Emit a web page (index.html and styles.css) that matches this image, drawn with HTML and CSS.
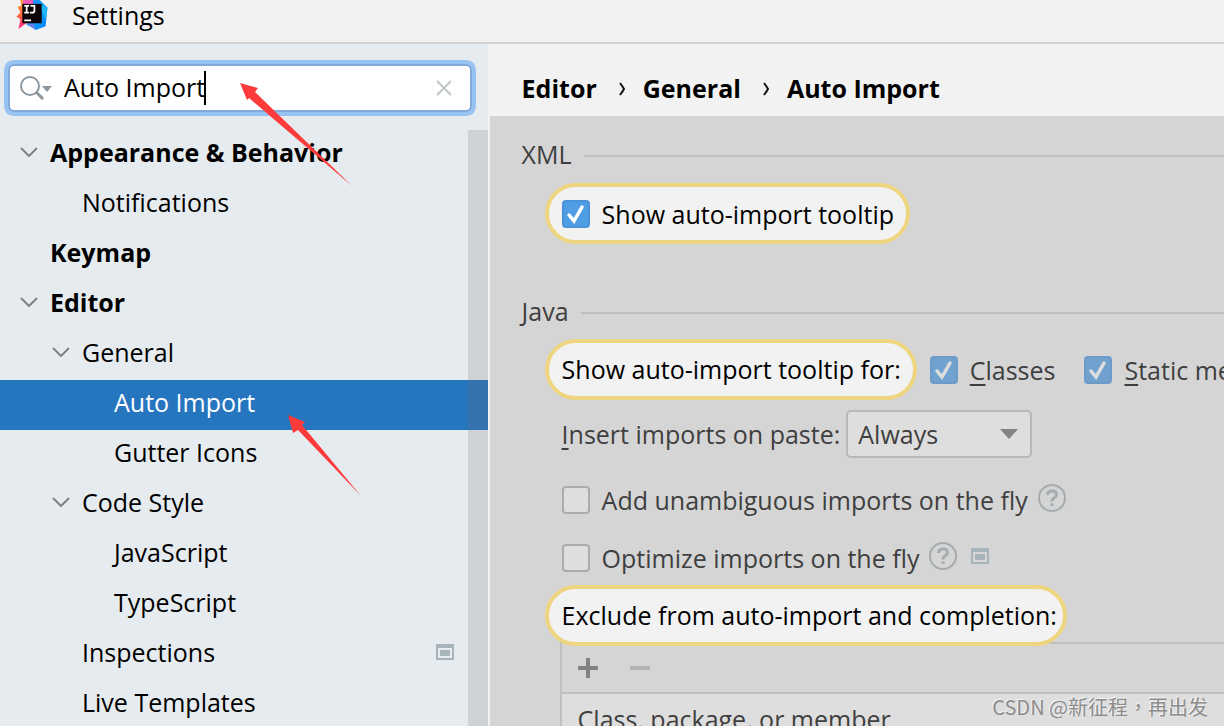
FILE: index.html
```html
<!DOCTYPE html>
<html lang="en">
<head>
<meta charset="utf-8">
<meta name="viewport" content="width=device-width, initial-scale=1">
<title>Settings</title>
<link rel="stylesheet" href="styles.css">
</head>
<body>
<div class="window">
  <header class="titlebar">
    <svg class="logo" viewBox="0 0 32 32" aria-hidden="true">
      <defs>
        <linearGradient id="warm" x1="0" y1="0" x2="0" y2="1"><stop offset="0" stop-color="#f9a03c"/><stop offset=".5" stop-color="#fb6a3c"/><stop offset="1" stop-color="#fe2889"/></linearGradient>
        <linearGradient id="cool" x1="0" y1="0" x2="1" y2="1"><stop offset="0" stop-color="#2b7cf0"/><stop offset=".5" stop-color="#08a0f8"/><stop offset="1" stop-color="#087cfa"/></linearGradient>
      </defs>
      <path d="M4 0 20 0 18 27 10 24 2 30 4 20 0 17 4 13 1 7 5 6Z" fill="url(#warm)"/>
      <path d="M7 0 20 0 17 8 6 8Z" fill="#f45bb8"/>
      <path d="M17 0 24 0 32 8 30 27 20 31 10 25 17 20Z" fill="url(#cool)"/>
      <path d="m24 5 8 3-2 12Z" fill="#21b7f5"/>
      <path d="m12 25 8 6-3-7Z" fill="#7d79e8"/>
      <rect x="6" y="4" width="20" height="20" fill="#0d0508"/>
      <path d="M8 6h5M8 13h5M10.500 6v7M14.500 6h4v5q0 2-2 2h-2.500" fill="none" stroke="#fff" stroke-width="1.800"/>
      <path d="M8 21h7" stroke="#fff" stroke-width="1.800"/>
    </svg>
    <h1 class="title">Settings</h1>
  </header>
  <div class="body">
    <aside class="sidebar">
      <div class="search">
        <svg class="search-icon" viewBox="0 0 32 24" aria-hidden="true">
          <circle cx="10" cy="10" r="9" fill="none" stroke="#8c979f" stroke-width="2"/>
          <path d="m16 16 7 7" stroke="#8c979f" stroke-width="3"/>
          <path d="M22 10h10l-5 6Z" fill="#8c979f"/>
        </svg>
        <input class="search-input" type="text" value="Auto Import" aria-label="Search settings">
        <span class="caret"></span>
        <button class="clear" type="button" aria-label="Clear search">
          <svg viewBox="0 0 16 16"><path d="m1 1 14 14M15 1 1 15" stroke="#bfc5c9" stroke-width="2"/></svg>
        </button>
      </div>
      <nav class="tree-wrap">
        <ul class="tree">
          <li class="row top"><svg class="chev" viewBox="0 0 18 10"><path d="m1 1 8 8 8-8"/></svg>Appearance &amp; Behavior</li>
          <li class="row level-1">Notifications</li>
          <li class="row top">Keymap</li>
          <li class="row top"><svg class="chev" viewBox="0 0 18 10"><path d="m1 1 8 8 8-8"/></svg>Editor</li>
          <li class="row level-1"><svg class="chev" viewBox="0 0 18 10"><path d="m1 1 8 8 8-8"/></svg>General</li>
          <li class="row level-2 selected">Auto Import</li>
          <li class="row level-2">Gutter Icons</li>
          <li class="row level-1"><svg class="chev" viewBox="0 0 18 10"><path d="m1 1 8 8 8-8"/></svg>Code Style</li>
          <li class="row level-2">JavaScript</li>
          <li class="row level-2">TypeScript</li>
          <li class="row level-1">Inspections<svg class="project" viewBox="0 0 18 16"><path d="M0 0h18v16H0ZM2 4v10h14V4Z" fill-rule="evenodd"/><path d="M4 6h10v6H4Z"/></svg></li>
          <li class="row level-1">Live Templates</li>
        </ul>
        <div class="scrollbar"></div>
      </nav>
    </aside>
    <main class="content">
      <div class="crumbs">
        <span>Editor</span><svg class="sep" viewBox="0 0 6 14"><path d="M1 1q3 4 4 6-1 2-4 6"/></svg>
        <span>General</span><svg class="sep" viewBox="0 0 6 14"><path d="M1 1q3 4 4 6-1 2-4 6"/></svg>
        <span>Auto Import</span>
      </div>
      <div class="panel">
        <h2 class="section">XML</h2>
        <label class="pill first"><input class="check" type="checkbox" checked>Show auto-import tooltip</label>
        <h2 class="section java">Java</h2>
        <div class="line">
          <span class="pill">Show auto-import tooltip for:</span>
          <label class="option"><input class="check dim" type="checkbox" checked><span><u>C</u>lasses</span></label>
          <label class="option second"><input class="check dim" type="checkbox" checked><span><u>S</u>tatic me</span></label>
        </div>
        <div class="line paste">
          <label for="paste"><u>I</u>nsert imports on paste:</label>
          <select id="paste" class="combo"><option>Always</option><option>Ask</option><option>Never</option></select>
        </div>
        <div class="line fly">
          <label class="option"><input class="check" type="checkbox"><span>Add unambiguous imports on the fly</span></label>
          <svg class="help" viewBox="0 0 28 28"><circle cx="14" cy="14" r="13"/><path d="M9.500 11q0-4 4.500-4t4.500 3.500q0 2-2.500 3.500-2 1.200-2 3.500M14 19.500v2.500"/></svg>
        </div>
        <div class="line fly">
          <label class="option"><input class="check" type="checkbox"><span>Optimize imports on the fly</span></label>
          <svg class="help" viewBox="0 0 28 28"><circle cx="14" cy="14" r="13"/><path d="M9.500 11q0-4 4.500-4t4.500 3.500q0 2-2.500 3.500-2 1.200-2 3.500M14 19.500v2.500"/></svg>
          <svg class="project inline" viewBox="0 0 18 16"><path d="M0 0h18v16H0ZM2 4v10h14V4Z" fill-rule="evenodd"/><path d="M4 6h10v6H4Z"/></svg>
        </div>
        <div class="pill exclude">Exclude from auto-import and completion:</div>
        <div class="list">
          <div class="tools">
            <button class="tool" type="button" aria-label="Add"><svg viewBox="0 0 20 20"><path d="M10 0v20M0 10h20" stroke="#828282" stroke-width="4"/></svg></button>
            <button class="tool" type="button" aria-label="Remove"><svg viewBox="0 0 20 20"><path d="M0 10h20" stroke="#b2b2b2" stroke-width="4"/></svg></button>
          </div>
          <table class="grid"><thead><tr><th>Class, package, or member</th></tr></thead></table>
        </div>
      </div>
    </main>
  </div>
  <svg class="arrow arrow-search" viewBox="0 0 112 104" aria-hidden="true"><path d="M0 0 18 5 15 9 112 103 9 15 7 17Z"/></svg>
  <svg class="arrow arrow-tree" viewBox="0 0 74 82" aria-hidden="true"><path d="M0 0 17 7 14 10 73 81 10 15 5 18Z"/></svg>
  <div class="watermark" lang="zh-TW">CSDN @新征程，再出发</div>
</div>
</body>
</html>
```
FILE: styles.css
```css
* { box-sizing: border-box; }
body {
  margin: 0;
  font-family: "Open Sans", "Noto Sans", sans-serif;
  font-size: 25px;
  line-height: 34px;
  color: #000;
  background: #f2f2f2;
}
input, select, button { font: inherit; color: inherit; }
.window {
  position: relative;
  display: flex;
  flex-direction: column;
  height: 100vh;
  overflow: hidden;
}
.titlebar {
  display: flex;
  flex: none;
  align-items: flex-start;
  gap: 24px;
  height: 44px;
  padding-left: 16px;
  border-bottom: 2px solid #d1d1d1;
}
.logo { width: 32px; height: 31px; }
.title { margin: 0; font-size: 25px; line-height: 30px; font-weight: 400; }
.body { display: flex; flex: 1; min-height: 0; }
.sidebar {
  display: flex;
  flex: 0 0 40%;
  flex-direction: column;
  border-right: 2px solid #f2f2f2;
  background: #e6ebef;
}
.search {
  display: flex;
  flex: none;
  align-items: center;
  height: 44px;
  margin: 22px 18px 20px 10px;
  padding: 0 18px 0 10px;
  border-radius: 4px;
  background: #fff;
  box-shadow: 0 0 0 2px #82a9d9, 0 0 0 6px #97c3f3;
}
.search-icon { flex: none; width: 32px; height: 24px; margin-right: 12px; }
.search-input {
  field-sizing: content;
  height: 34px;
  padding: 0 0 2px;
  border: 0;
  outline: 0;
  background: none;
}
.caret { width: 2px; height: 34px; margin-left: -1px; background: #000; }
.clear { margin-left: auto; padding: 0; border: 0; background: none; }
.clear svg { display: block; width: 16px; height: 16px; }
.tree-wrap { position: relative; flex: 1; min-height: 0; }
.tree { margin: 0; padding: 0; list-style: none; }
.row {
  position: relative;
  display: flex;
  align-items: center;
  height: 50px;
  padding-bottom: 6px;
  padding-left: 50px;
}
.top { font-weight: 700; }
.level-1 { padding-left: 82px; }
.level-2 { padding-left: 114px; }
.selected { color: #fff; background: #2675bf; }
.chev {
  width: 18px;
  height: 10px;
  margin-left: -30px;
  margin-right: 12px;
  fill: none;
  stroke: #7f8285;
  stroke-width: 2;
}
.project { width: 18px; height: 16px; margin-left: auto; margin-right: 34px; fill: #a8b4bb; }
.scrollbar {
  position: absolute;
  inset: 0 0 0 auto;
  width: 20px;
  background: rgba(110, 110, 120, 0.2);
}
.content { display: flex; flex: 1; flex-direction: column; min-width: 0; }
.crumbs {
  display: flex;
  flex: none;
  align-items: center;
  height: 72px;
  padding: 16px 0 0 32px;
  font-weight: 700;
}
.sep {
  width: 6px;
  height: 14px;
  margin: 2px 18px 0 22px;
  fill: none;
  stroke: #111;
  stroke-width: 2;
}
.panel {
  flex: 1;
  padding: 21px 0 0 32px;
  white-space: nowrap;
  color: #3f3f3f;
  background: #d5d5d5;
}
.section {
  display: flex;
  align-items: center;
  gap: 12px;
  margin: 0;
  font-size: 25px;
  font-weight: 400;
}
.section::after { flex: 1; height: 2px; margin-top: 4px; background: #bfbfbf; content: ""; }
.java { margin-top: 50px; }
.pill {
  display: flex;
  align-items: center;
  width: max-content;
  height: 61px;
  margin-left: 23px;
  padding: 0 12px 0 13px;
  border: 4px solid #eed57f;
  border-radius: 31px;
  color: #000;
  background: #f2f2f2;
}
.first { margin-top: 12px; }
.check {
  flex: none;
  width: 28px;
  height: 28px;
  margin: 0 12px 0 0;
  border: 2px solid #acacac;
  border-radius: 4px;
  appearance: none;
  background: #dedede;
}
.check:checked {
  border-color: #4a92d9;
  background: #4f9ee3 url("data:image/svg+xml,%3Csvg xmlns='http://www.w3.org/2000/svg' viewBox='0 0 24 24'%3E%3Cpath d='M5 13l5 6L18 5' fill='none' stroke='%23fff' stroke-width='3.500' stroke-linecap='round'/%3E%3C/svg%3E") center / 24px 24px no-repeat;
}
.check.dim:checked {
  border-color: #6c9bc9;
  background: #70a1cf url("data:image/svg+xml,%3Csvg xmlns='http://www.w3.org/2000/svg' viewBox='0 0 24 24'%3E%3Cpath d='M5 13l5 6L18 5' fill='none' stroke='%23dedede' stroke-width='3.500' stroke-linecap='round'/%3E%3C/svg%3E") center / 24px 24px no-repeat;
}
.option { display: flex; align-items: center; }
.line { display: flex; align-items: center; }
.java + .line { margin-top: 11px; gap: 13px; }
.java + .line .pill { padding-bottom: 2px; }
.java + .line .second { margin-left: 16px; }
u { text-decoration-thickness: 2px; text-underline-offset: 4px; text-decoration-skip-ink: none; }
.paste { gap: 6px; margin: 10px 0 0 40px; }
.combo {
  width: 186px;
  height: 48px;
  padding: 0 10px;
  border: 2px solid #b8b8b8;
  border-radius: 5px;
  appearance: none;
  background: #dedede url("data:image/svg+xml,%3Csvg xmlns='http://www.w3.org/2000/svg' viewBox='0 0 18 10'%3E%3Cpath d='M0 0h18l-9 10z' fill='%23828282'/%3E%3C/svg%3E") right 12px center / 18px 10px no-repeat;
}
.fly { height: 58px; margin-left: 40px; }
.paste + .fly { margin-top: 13px; }
.help {
  width: 28px;
  height: 28px;
  margin: 0 14px 4px 10px;
  fill: none;
  stroke: #a5acb0;
  stroke-width: 2;
}
.help path { stroke-width: 3; }
.inline { margin: 0 0 4px; }
.exclude { position: relative; margin-top: -2px; padding: 0 6px 2px 13px; }
.list {
  margin: -4px 0 0 38px;
  border: solid #bfbfbf;
  border-width: 2px 0 0 2px;
}
.tools {
  display: flex;
  align-items: center;
  gap: 32px;
  height: 50px;
  padding-left: 16px;
  border-bottom: 2px solid #bfbfbf;
}
.tool { padding: 0; border: 0; background: none; }
.tool svg { display: block; width: 20px; height: 20px; }
.grid { width: 100%; border-spacing: 0; background: #dedede; }
.grid th { height: 50px; padding: 0 16px; font-weight: 400; text-align: left; }
.arrow { position: absolute; fill: #fe3b3b; }
.arrow-search { left: 240px; top: 83px; width: 112px; height: 104px; }
.arrow-tree { left: 288px; top: 415px; width: 74px; height: 82px; }
.watermark {
  position: absolute;
  right: 16px;
  bottom: 4px;
  font-family: "Noto Sans CJK TC", sans-serif;
  font-size: 20px;
  font-weight: 400;
  line-height: 30px;
  color: #8c8c8c;
  text-shadow: -1px -1px 0 #f4f4f4;
}
```
